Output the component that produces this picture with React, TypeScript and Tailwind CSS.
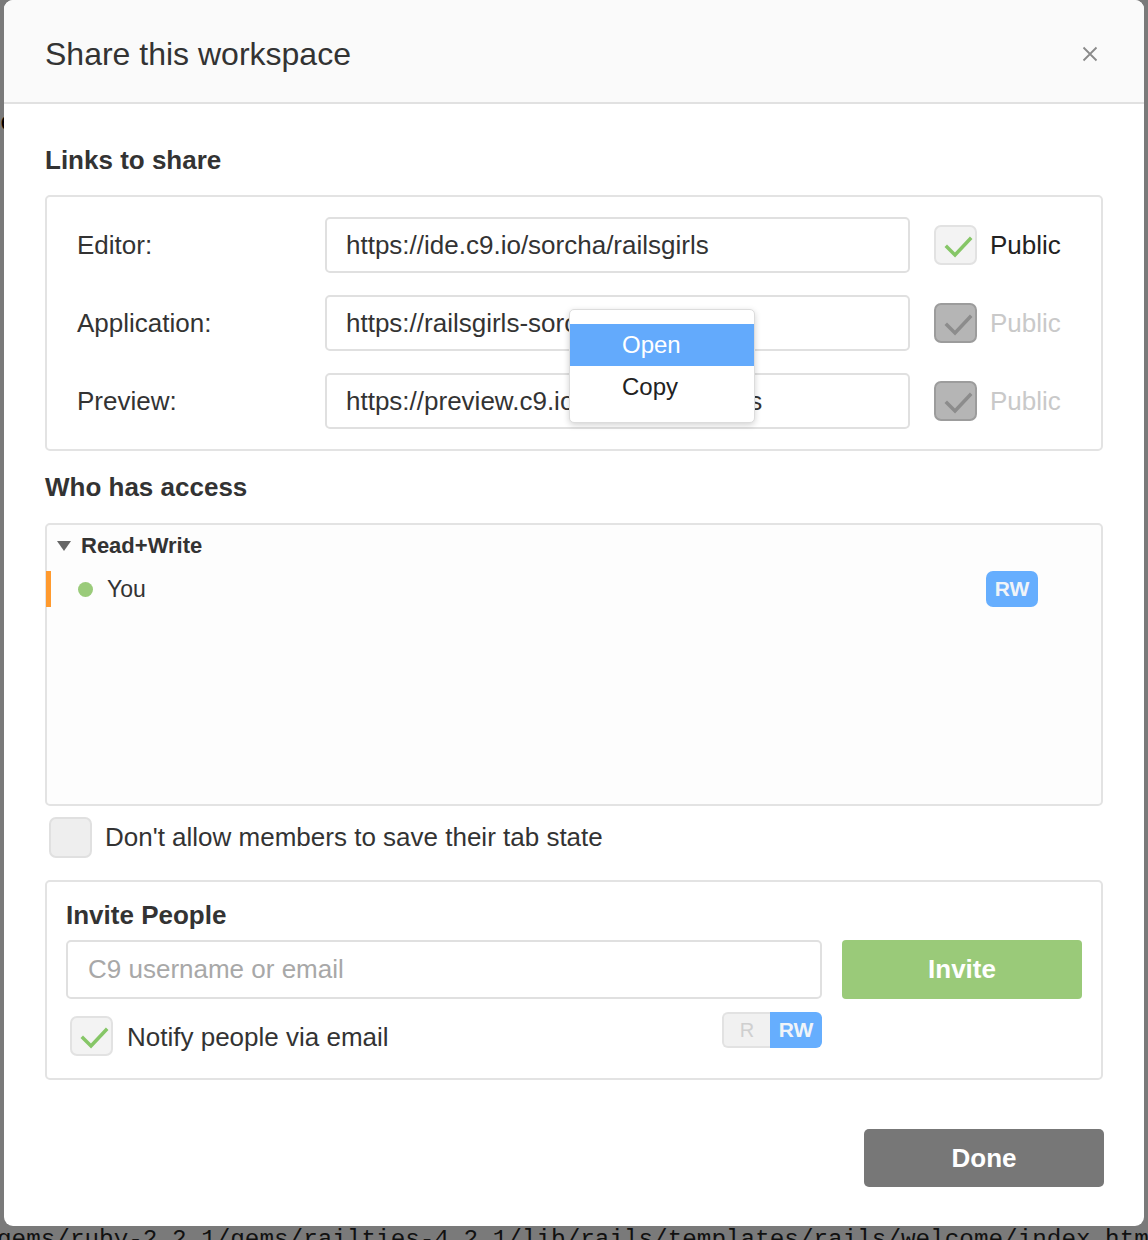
import React from "react";

const font = { fontFamily: '"Liberation Sans", Arial, Helvetica, sans-serif' };

function Check({ color }: { color: string }) {
  return (
    <svg width="43" height="40" viewBox="0 0 43 40" className="absolute inset-0">
      <polyline points="11,20 19,28 34,12" fill="none" stroke={color} strokeWidth="3.5" strokeLinecap="square" />
    </svg>
  );
}

function CheckBox({ state }: { state: "on" | "off" | "disabled" }) {
  const cls =
    state === "disabled"
      ? "bg-[#b5b5b5] border-[#9c9c9c]"
      : "bg-[#f3f3f3] border-[#e2e2e2]";
  return (
    <div className={`relative w-[43px] h-[40px] shrink-0 rounded-[7px] border-2 ${cls}`}>
      {state === "on" && <Check color="#86c667" />}
      {state === "disabled" && <Check color="#8c8c8c" />}
    </div>
  );
}

function LinkRow({ label, url, disabled }: { label: string; url: string; disabled?: boolean }) {
  return (
    <div className="flex items-center h-[56px]">
      <div className="w-[248px] text-[26px] text-[#333]">{label}</div>
      <div className="w-[585px] h-[56px] rounded-[5px] border-2 border-[#e0e0e0] bg-white flex items-center pl-[19px] text-[26px] text-[#333] overflow-hidden whitespace-nowrap">
        {url}
      </div>
      <div className="ml-[24px]">
        <CheckBox state={disabled ? "disabled" : "on"} />
      </div>
      <div className={`ml-[13px] text-[26px] ${disabled ? "text-[#c9c9c9]" : "text-[#222]"}`}>Public</div>
    </div>
  );
}

export default function App() {
  return (
    <div className="relative w-[1148px] h-[1240px] bg-[#7a7a7a] overflow-hidden" style={font}>
      <div className="absolute left-0 top-[110px] text-[26px] text-black leading-none" style={{ fontFamily: '"Liberation Mono", monospace' }}>e</div>
      <div className="relative ml-[4px] w-[1140px] h-[1226px] bg-white rounded-[9px] flex flex-col">
        {/* header */}
        <div className="h-[104px] shrink-0 bg-[#fafafa] rounded-t-[9px] border-b-2 border-[#e1e1e1] flex items-center justify-between pl-[41px] pr-[46px] pt-[6px]">
          <div className="text-[32px] text-[#333]">Share this workspace</div>
          <svg width="16" height="16" viewBox="0 0 16 16">
            <path d="M1.5 1.5 L14.5 14.5 M14.5 1.5 L1.5 14.5" stroke="#8a8a8a" strokeWidth="1.8" />
          </svg>
        </div>

        <div className="px-[41px] flex flex-col">
          <div className="mt-[40px] h-[32px] leading-[32px] text-[26px] font-bold text-[#333]">Links to share</div>

          <div className="relative mt-[19px] h-[256px] rounded-[5px] border-2 border-[#e3e3e3] pl-[30px] py-[20px] flex flex-col gap-[22px]">
            <LinkRow label="Editor:" url="https://ide.c9.io/sorcha/railsgirls" />
            <LinkRow label="Application:" url="https://railsgirls-sorcha.c9.io" disabled />
            <LinkRow label="Preview:" url="https://preview.c9.io/sorcha/railsgirls" disabled />

            {/* context menu */}
            <div className="absolute left-[522px] top-[112px] w-[186px] h-[114px] bg-white rounded-[5px] border border-[#dcdcdc] shadow-[0_2px_6px_rgba(0,0,0,0.18)] pt-[14px]">
              <div className="h-[42px] bg-[#63aafc] text-white text-[24px] flex items-center pl-[52px]">Open</div>
              <div className="h-[42px] text-[#222] text-[24px] flex items-center pl-[52px]">Copy</div>
            </div>
          </div>

          <div className="mt-[20px] h-[32px] leading-[32px] text-[26px] font-bold text-[#333]">Who has access</div>

          <div className="mt-[20px] h-[283px] rounded-[5px] border-2 border-[#e3e3e3] bg-[#fdfdfd] flex flex-col">
            <div className="flex items-center h-[40px] pt-[1px] pl-[10px]">
              <svg width="14" height="11" viewBox="0 0 14 11">
                <polygon points="0,1 14,1 7,11" fill="#666" />
              </svg>
              <div className="ml-[10px] text-[22px] font-bold text-[#333]">Read+Write</div>
            </div>
            <div className="mt-[6px] flex items-center h-[36px]">
              <div className="w-[5px] h-[36px] bg-[#ff9a2e] -ml-[1px]" />
              <div className="ml-[27px] w-[15px] h-[15px] rounded-full bg-[#9acb7a]" />
              <div className="ml-[14px] text-[23px] text-[#333]">You</div>
              <div className="ml-auto mr-[63px] w-[52px] h-[36px] rounded-[7px] bg-[#66aefe] text-[#f0f4f8] text-[21px] font-bold flex items-center justify-center">RW</div>
            </div>
          </div>

          <div className="mt-[10px] flex items-center h-[42px] pl-[4px]">
            <div className="w-[43px] h-[41px] rounded-[7px] border-2 border-[#e0e0e0] bg-[#eeeeee]" />
            <div className="ml-[13px] text-[26px] text-[#333]">Don't allow members to save their tab state</div>
          </div>

          <div className="mt-[22px] h-[200px] rounded-[5px] border-2 border-[#e3e3e3] pl-[19px] pr-[19px] pt-[17px] flex flex-col">
            <div className="h-[32px] leading-[32px] text-[26px] font-bold text-[#333]">Invite People</div>
            <div className="mt-[9px] flex">
              <div className="w-[756px] h-[59px] rounded-[5px] border-2 border-[#e0e0e0] flex items-center pl-[20px] text-[26px] text-[#a8a8a8]">C9 username or email</div>
              <div className="ml-[20px] w-[240px] h-[59px] rounded-[4px] bg-[#9aca79] text-white text-[26px] font-bold flex items-center justify-center">Invite</div>
            </div>
            <div className="mt-[13px] w-[756px] flex items-start">
              <div className="mt-[4px] ml-[4px]">
                <CheckBox state="on" />
              </div>
              <div className="mt-[4px] ml-[14px] h-[42px] flex items-center text-[26px] text-[#333]">Notify people via email</div>
              <div className="ml-auto flex h-[36px]">
                <div className="w-[48px] h-[36px] rounded-l-[6px] border-2 border-r-0 border-[#e2e2e2] bg-[#f1f1f1] text-[#cfcfcf] text-[20px] flex items-center justify-center">R</div>
                <div className="w-[52px] h-[36px] rounded-r-[6px] bg-[#66aefe] text-[#f0f4f8] text-[21px] font-bold flex items-center justify-center">RW</div>
              </div>
            </div>
          </div>

          <div className="mt-[49px] flex justify-end -mr-[1px]">
            <div className="w-[240px] h-[58px] rounded-[5px] bg-[#777777] text-white text-[26px] font-bold flex items-center justify-center">Done</div>
          </div>
        </div>
      </div>
      <div className="absolute left-[-3px] top-[1226px] whitespace-nowrap text-[24.3px] leading-[28px] text-[#111]" style={{ fontFamily: '"Liberation Mono", monospace' }}>
        gems/ruby-2.2.1/gems/railties-4.2.1/lib/rails/templates/rails/welcome/index.html
      </div>
    </div>
  );
}
